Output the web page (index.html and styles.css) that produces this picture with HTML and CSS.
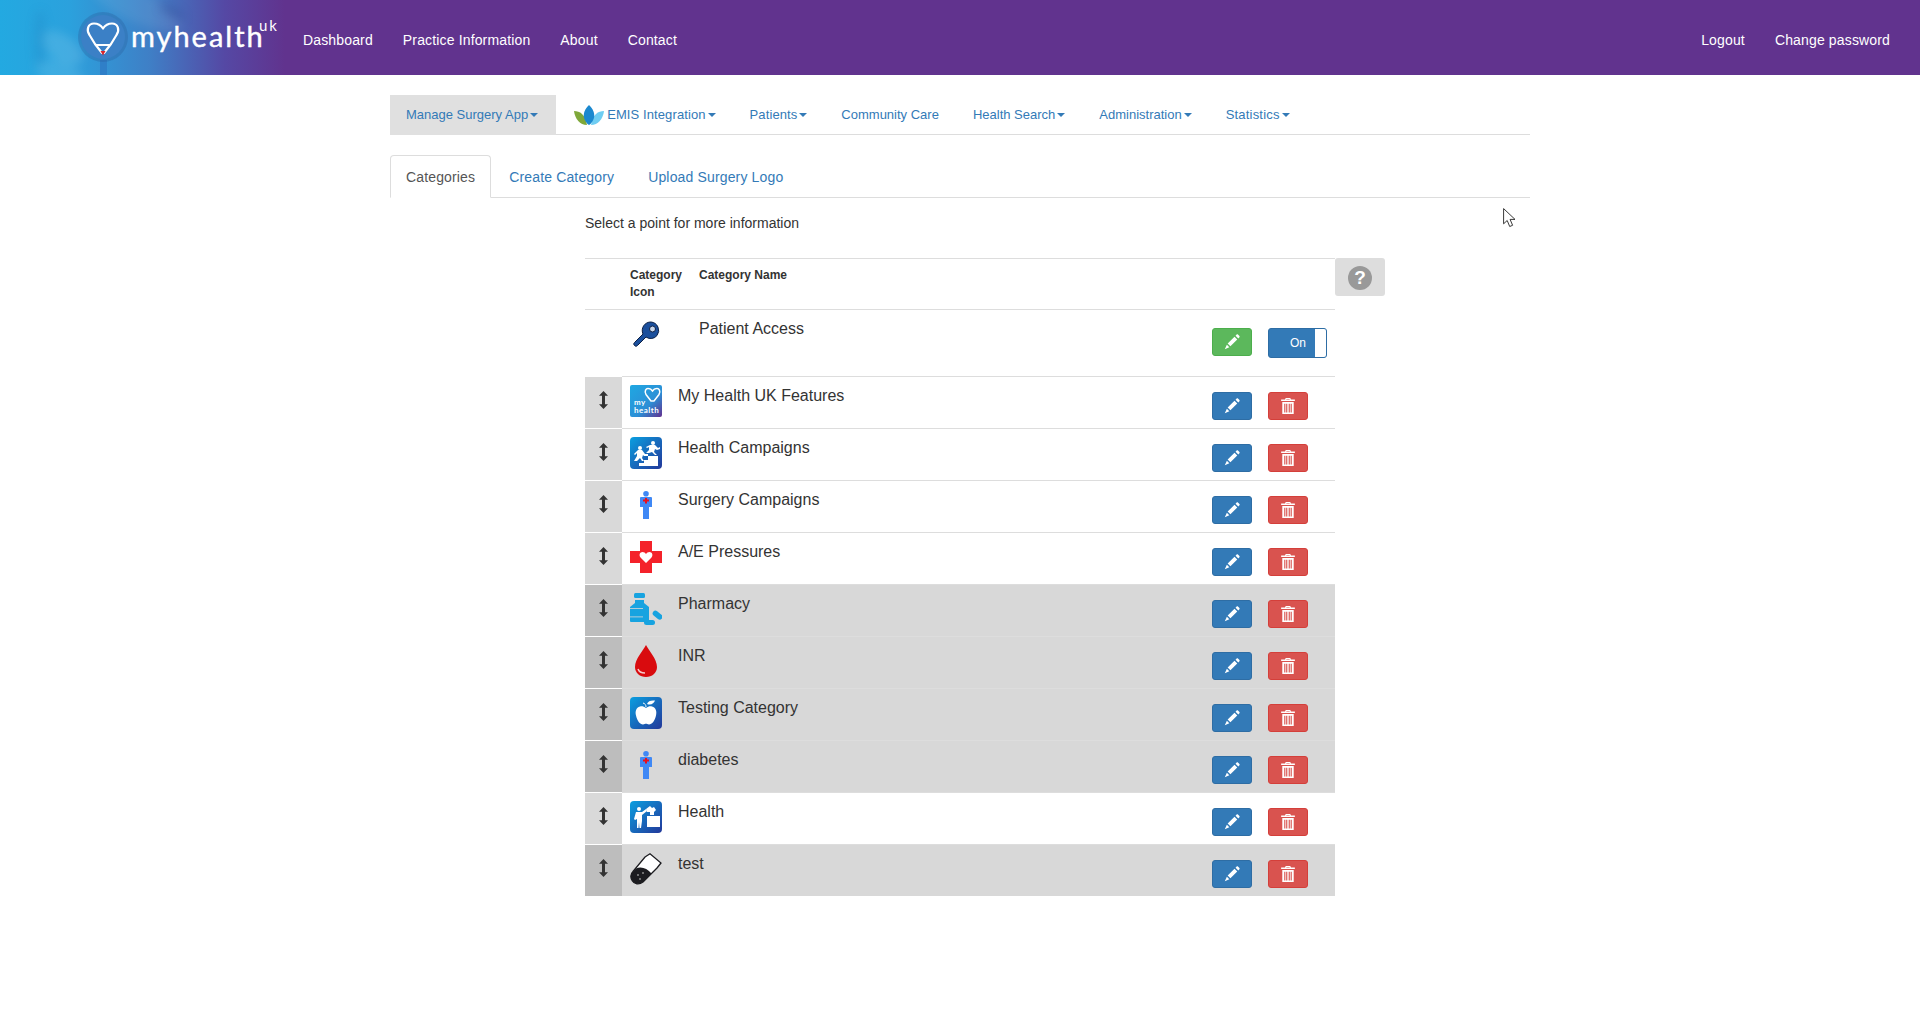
FILE: index.html
```html
<!DOCTYPE html>
<html lang="en">
<head>
    <meta charset="UTF-8">
    <meta name="viewport" content="width=device-width, initial-scale=1.0">
    <title>Manage Surgery App - Categories</title>
    <link rel="stylesheet" href="styles.css">
</head>
<body>
    <svg class="sprite" aria-hidden="true">
        <defs>
            <linearGradient id="tileBlue" x1="0" y1="0" x2="1" y2="1">
                <stop offset="0" stop-color="#0a9fe0"/>
                <stop offset="1" stop-color="#23389a"/>
            </linearGradient>
            <linearGradient id="tileBrand" x1="0" y1="0" x2="1" y2="1">
                <stop offset="0" stop-color="#1fa8e2"/>
                <stop offset="0.6" stop-color="#2c8fd6"/>
                <stop offset="1" stop-color="#63308f"/>
            </linearGradient>
        </defs>
        <symbol id="i-pencil" viewBox="0 0 14 14">
            <path fill="#fff" d="M3.2 8.4 9.2 2.400l2.400 2.400-6 6zM2.500 9.300l2.200 2.200-4 1.800zM10.100 1.500l1-1c.3-.3.8-.3 1.100 0l1.300 1.300c.3.3.3.8 0 1.100l-1 1z"/>
        </symbol>
        <symbol id="i-trash" viewBox="0 0 14 14">
            <path fill="#fff" fill-rule="evenodd" d="M5 0h4l.6 1.400H13v1.300H1V1.400h3.400zM5.700 .8l-.3.6h3.200l-.3-.6zM2 3.400h10V14H2zM3.700 5v7.600h1V5zM5.400 5v7.600h1V5zM7.600 5v7.600h1V5zM9.300 5v7.600h1V5z"/>
        </symbol>
        <symbol id="i-sort" viewBox="0 0 9 18">
            <path fill="#333" d="M4.500 0 9 4.800H6v8.400h3L4.500 18 0 13.200h3V4.800H0z"/>
        </symbol>
        <symbol id="i-person" viewBox="0 0 32 32">
            <circle cx="16" cy="4.700" r="2.800" fill="#3f88f5"/>
            <path fill="#3f88f5" d="M11 8h10q1 0 1 1v9h-3v12h-6V18h-3V9q0-1 1-1z"/>
            <path fill="#e8101c" d="M15 9h2v1.500h2v2h-2v2h-2v-2h-2v-2h2z"/>
        </symbol>
    </svg>

    <header class="topbar">
        <a class="brand" href="#">
            <svg class="brand-photo" viewBox="0 0 288 75" aria-hidden="true">
                <g class="blurred">
                    <ellipse cx="62" cy="48" rx="24" ry="13" transform="rotate(35 62 48)" fill="#fff" opacity="0.12"/>
                    <ellipse cx="60" cy="74" rx="26" ry="12" transform="rotate(20 60 74)" fill="#fff" opacity="0.1"/>
                    <ellipse cx="40" cy="40" rx="6" ry="30" fill="#1a6fb4" opacity="0.18"/>
                    <ellipse cx="135" cy="5" rx="50" ry="16" transform="rotate(25 135 5)" fill="#fff" opacity="0.08"/>
                    <ellipse cx="172" cy="12" rx="14" ry="5" transform="rotate(30 172 12)" fill="#25408f" opacity="0.3"/>
                </g>
            </svg>
            <svg class="brand-mark" viewBox="0 0 56 75" aria-hidden="true">
                <rect x="25" y="60" width="7" height="15" fill="#2f7fc8"/>
                <circle cx="28" cy="37" r="25" fill="#2c5f9f" opacity="0.35"/>
                <circle cx="28" cy="37" r="22" fill="#3b80c6"/>
                <path fill="none" stroke="#fff" stroke-width="2.200" stroke-linejoin="round" stroke-linecap="round" d="M20 44 14.500 35c-3.500-5-1.500-11.500 4.500-11.500 4 0 7 2 9 5 2-3 5-5 9-5 6 0 8 6.500 4.500 11.500L36 44M20 44l7 9h2l7-9M21 45h14"/>
                <path fill="#d8262e" d="M25.500 51h5L28 55.500z"/>
            </svg>
            <span class="brand-name">myhealth<sup>uk</sup></span>
        </a>
        <nav class="topnav">
            <a href="#">Dashboard</a>
            <a href="#">Practice Information</a>
            <a href="#">About</a>
            <a href="#">Contact</a>
        </nav>
        <nav class="topnav topnav-right">
            <a href="#">Logout</a>
            <a href="#">Change password</a>
        </nav>
    </header>

    <main class="container">
        <ul class="nav-tabs nav-main">
            <li class="grey"><a href="#">Manage Surgery App<span class="caret"></span></a></li>
            <li><a href="#">
                <svg class="emis-leaf" viewBox="0 0 30 20" aria-hidden="true">
                    <path fill="#7fa83a" d="M0 6c6 0 11 3 13 14C6 20 1 14 0 6z"/>
                    <path fill="#6fcdf2" d="M30 6c-6 0-11 3-13 14 7 0 12-6 13-14z"/>
                    <path fill="#1b88cf" d="M15 0c4 4 6 8 5 13-1 3-3 6-5 7-2-1-4-4-5-7-1-5 1-9 5-13z"/>
                </svg>
                EMIS Integration<span class="caret"></span></a></li>
            <li><a href="#">Patients<span class="caret"></span></a></li>
            <li class="tight"><a href="#">Community Care</a></li>
            <li class="tight"><a href="#">Health Search<span class="caret"></span></a></li>
            <li class="tight"><a href="#">Administration<span class="caret"></span></a></li>
            <li class="wide"><a href="#">Statistics<span class="caret"></span></a></li>
        </ul>

        <ul class="nav-tabs nav-sub">
            <li class="active"><a href="#">Categories</a></li>
            <li><a href="#">Create Category</a></li>
            <li><a href="#">Upload Surgery Logo</a></li>
        </ul>

        <div class="content">
            <p class="intro">Select a point for more information</p>

            <div class="cat-area">
                <div class="cat-tables">
                    <table class="cat-table cat-head">
                        <thead>
                            <tr>
                                <th class="col-handle"></th>
                                <th class="col-icon-wide">Category Icon</th>
                                <th>Category Name</th>
                                <th class="col-actions"></th>
                            </tr>
                        </thead>
                        <tbody>
                            <tr>
                                <td></td>
                                <td>
                                    <svg class="cat-icon" viewBox="0 0 32 32" aria-hidden="true">
                                        <path fill="#1b4f9c" stroke="#0b1f44" stroke-width="1" d="M21 4a8.500 8.500 0 0 1 6 13.500 8 8 0 0 1-11 1.500L7.500 27.500c-1 1-2 1-3 0s-1-2 0-3L13 16a8.500 8.500 0 0 1 8-12z"/>
                                        <circle cx="22.500" cy="11" r="3" fill="#c9d6ea" stroke="#0b1f44" stroke-width="1"/>
                                    </svg>
                                </td>
                                <td class="cat-name">Patient Access</td>
                                <td class="col-actions cell-tall">
                                    <div class="actions">
                                        <a class="btn btn-green" href="#"><svg class="glyph"><use href="#i-pencil"/></svg></a>
                                        <span class="toggle"><span class="toggle-label">On</span><span class="toggle-knob"></span></span>
                                    </div>
                                </td>
                            </tr>
                        </tbody>
                    </table>

                    <table class="cat-table cat-list">
                        <tbody>
                            <tr>
                                <td class="col-handle"><svg class="sort"><use href="#i-sort"/></svg></td>
                                <td class="col-icon">
                                    <svg class="cat-icon" viewBox="0 0 32 32" aria-hidden="true">
                                        <rect width="32" height="32" rx="2" fill="url(#tileBrand)"/>
                                        <path fill="none" stroke="#fff" stroke-width="1.500" d="M21 16 16 9.500c-2-3 0-6.500 2.500-6 1.500 0 3 1 4 2.500 1-1.500 2.500-2.500 4-2.500 2.500-.5 4.500 3 2.500 6L24 16z"/>
                                        <text class="tile-text" x="4" y="20">my</text>
                                        <text class="tile-text" x="4" y="28">health</text>
                                    </svg>
                                </td>
                                <td class="cat-name">My Health UK Features</td>
                                <td class="col-actions"><div class="actions"><a class="btn btn-blue" href="#"><svg class="glyph"><use href="#i-pencil"/></svg></a><a class="btn btn-red" href="#"><svg class="glyph"><use href="#i-trash"/></svg></a></div></td>
                            </tr>
                            <tr>
                                <td class="col-handle"><svg class="sort"><use href="#i-sort"/></svg></td>
                                <td class="col-icon">
                                    <svg class="cat-icon" viewBox="0 0 32 32" aria-hidden="true">
                                        <rect width="32" height="32" rx="4" fill="url(#tileBlue)"/>
                                        <path fill="#fff" d="M9 29v-3h5v-3h4v-4h10v10z"/>
                                        <circle cx="10" cy="11" r="2" fill="#fff"/>
                                        <path fill="#fff" d="M8 13h4l3 4 3 0v2h-4l-1-1-1 3 2 3h-2l-2-3-3 3H4l3-5 0-3-2 2-1-1z"/>
                                        <circle cx="23" cy="6" r="2" fill="#fff"/>
                                        <path fill="#fff" d="M20 8h5l3 3 2-1v2l-3 1-2-1-1 3 3 3h-2l-3-3-3 1h-3l3-3 0-3-2 1-1-1z"/>
                                    </svg>
                                </td>
                                <td class="cat-name">Health Campaigns</td>
                                <td class="col-actions"><div class="actions"><a class="btn btn-blue" href="#"><svg class="glyph"><use href="#i-pencil"/></svg></a><a class="btn btn-red" href="#"><svg class="glyph"><use href="#i-trash"/></svg></a></div></td>
                            </tr>
                            <tr>
                                <td class="col-handle"><svg class="sort"><use href="#i-sort"/></svg></td>
                                <td class="col-icon"><svg class="cat-icon"><use href="#i-person"/></svg></td>
                                <td class="cat-name">Surgery Campaigns</td>
                                <td class="col-actions"><div class="actions"><a class="btn btn-blue" href="#"><svg class="glyph"><use href="#i-pencil"/></svg></a><a class="btn btn-red" href="#"><svg class="glyph"><use href="#i-trash"/></svg></a></div></td>
                            </tr>
                            <tr>
                                <td class="col-handle"><svg class="sort"><use href="#i-sort"/></svg></td>
                                <td class="col-icon">
                                    <svg class="cat-icon" viewBox="0 0 32 32" aria-hidden="true">
                                        <path fill="#f4222a" d="M10 0h12v10h10v12H22v10H10V22H0V10h10z"/>
                                        <path fill="#fff" d="M16 22 10.500 16.500c-2-2.500-.5-5.500 2-5.500 1.500 0 2.700.8 3.500 2 .8-1.200 2-2 3.500-2 2.500 0 4 3 2 5.500z"/>
                                    </svg>
                                </td>
                                <td class="cat-name">A/E Pressures</td>
                                <td class="col-actions"><div class="actions"><a class="btn btn-blue" href="#"><svg class="glyph"><use href="#i-pencil"/></svg></a><a class="btn btn-red" href="#"><svg class="glyph"><use href="#i-trash"/></svg></a></div></td>
                            </tr>
                            <tr class="row-off">
                                <td class="col-handle"><svg class="sort"><use href="#i-sort"/></svg></td>
                                <td class="col-icon">
                                    <svg class="cat-icon" viewBox="0 0 32 32" aria-hidden="true">
                                        <rect x="4" y="0" width="11" height="5" rx="1.500" fill="#17a3e0"/>
                                        <path fill="#17a3e0" d="M5 7h9v3l5 4v14q0 1-1 1H1q-1 0-1-1V14l5-4z"/>
                                        <rect x="0" y="15" width="13" height="0.800" fill="#d8d8d8"/>
                                        <rect x="0" y="23.500" width="13" height="0.800" fill="#d8d8d8"/>
                                        <rect x="22" y="19" width="11" height="5.500" rx="2.700" fill="#17a3e0" transform="rotate(40 27 22)"/>
                                        <rect x="14" y="27" width="11" height="5" rx="2.500" fill="#17a3e0"/>
                                    </svg>
                                </td>
                                <td class="cat-name">Pharmacy</td>
                                <td class="col-actions"><div class="actions"><a class="btn btn-blue" href="#"><svg class="glyph"><use href="#i-pencil"/></svg></a><a class="btn btn-red" href="#"><svg class="glyph"><use href="#i-trash"/></svg></a></div></td>
                            </tr>
                            <tr class="row-off">
                                <td class="col-handle"><svg class="sort"><use href="#i-sort"/></svg></td>
                                <td class="col-icon">
                                    <svg class="cat-icon" viewBox="0 0 32 32" aria-hidden="true">
                                        <path fill="#d90b0e" d="M16 0c3 6 11 14 11 22 0 6-5 10-11 10S5 28 5 22C5 14 13 6 16 0z"/>
                                        <path fill="none" stroke="#f6c9c9" stroke-width="1.500" d="M8 24c1 3 4 4 7 4"/>
                                    </svg>
                                </td>
                                <td class="cat-name">INR</td>
                                <td class="col-actions"><div class="actions"><a class="btn btn-blue" href="#"><svg class="glyph"><use href="#i-pencil"/></svg></a><a class="btn btn-red" href="#"><svg class="glyph"><use href="#i-trash"/></svg></a></div></td>
                            </tr>
                            <tr class="row-off">
                                <td class="col-handle"><svg class="sort"><use href="#i-sort"/></svg></td>
                                <td class="col-icon">
                                    <svg class="cat-icon" viewBox="0 0 32 32" aria-hidden="true">
                                        <rect width="32" height="32" rx="4" fill="url(#tileBlue)"/>
                                        <path fill="#fff" d="M16 11c2-1.500 4-2 6-1.500 4 1 5 5 4 9-1 5-4 9-7 9-1.500 0-2-.7-3-.7s-1.500 .7-3 .7c-3 0-6-4-7-9-1-4 0-8 4-9 2-.5 4 0 6 1.500z"/>
                                        <path fill="none" stroke="#fff" stroke-width="1" d="M16 10c0-2-1-3.500-3-4"/>
                                        <path fill="#fff" d="M17 7c1-3 4-4 8-3.500-1 3-4 5-8 3.500z"/>
                                    </svg>
                                </td>
                                <td class="cat-name">Testing Category</td>
                                <td class="col-actions"><div class="actions"><a class="btn btn-blue" href="#"><svg class="glyph"><use href="#i-pencil"/></svg></a><a class="btn btn-red" href="#"><svg class="glyph"><use href="#i-trash"/></svg></a></div></td>
                            </tr>
                            <tr class="row-off">
                                <td class="col-handle"><svg class="sort"><use href="#i-sort"/></svg></td>
                                <td class="col-icon"><svg class="cat-icon"><use href="#i-person"/></svg></td>
                                <td class="cat-name">diabetes</td>
                                <td class="col-actions"><div class="actions"><a class="btn btn-blue" href="#"><svg class="glyph"><use href="#i-pencil"/></svg></a><a class="btn btn-red" href="#"><svg class="glyph"><use href="#i-trash"/></svg></a></div></td>
                            </tr>
                            <tr>
                                <td class="col-handle"><svg class="sort"><use href="#i-sort"/></svg></td>
                                <td class="col-icon">
                                    <svg class="cat-icon" viewBox="0 0 32 32" aria-hidden="true">
                                        <rect width="32" height="32" rx="4" fill="url(#tileBlue)"/>
                                        <circle cx="9" cy="8" r="2" fill="#fff"/>
                                        <path fill="#fff" d="M6 11h6l4-3 1 2-5 4v6l-1 7H9.500l-.5-6-.5 6H7v-9l-2 1-1-1z"/>
                                        <path fill="#fff" d="M17 15h13v11H17z"/>
                                        <path fill="#fff" d="M16 8l4-3 2 2 2-1 2 3-2 2v3h-4v-3h-3z"/>
                                    </svg>
                                </td>
                                <td class="cat-name">Health</td>
                                <td class="col-actions"><div class="actions"><a class="btn btn-blue" href="#"><svg class="glyph"><use href="#i-pencil"/></svg></a><a class="btn btn-red" href="#"><svg class="glyph"><use href="#i-trash"/></svg></a></div></td>
                            </tr>
                            <tr class="row-off">
                                <td class="col-handle"><svg class="sort"><use href="#i-sort"/></svg></td>
                                <td class="col-icon">
                                    <svg class="cat-icon" viewBox="0 0 32 32" aria-hidden="true">
                                        <path fill="#fff" stroke="#1c1c20" stroke-width="1.300" d="M15 4 20 .8 31 10l-4 5-14 14c-4 3-9 2-10.500-1C0 25 .5 21 3 18.500z"/>
                                        <path fill="#1c1c20" d="M6 15.500c5-2.500 11-.5 15.500 5L13 29c-4 3-9 2-10.500-1C0 25 .5 21 3 18.500z"/>
                                        <circle cx="8" cy="22" r="1" fill="#8a8a8a"/>
                                        <circle cx="13" cy="20" r="1" fill="#8a8a8a"/>
                                        <circle cx="10" cy="26" r="1" fill="#8a8a8a"/>
                                    </svg>
                                </td>
                                <td class="cat-name">test</td>
                                <td class="col-actions"><div class="actions"><a class="btn btn-blue" href="#"><svg class="glyph"><use href="#i-pencil"/></svg></a><a class="btn btn-red" href="#"><svg class="glyph"><use href="#i-trash"/></svg></a></div></td>
                            </tr>
                        </tbody>
                    </table>
                </div>
                <a class="help-btn" href="#"><span class="help-circle">?</span></a>
            </div>
        </div>
    </main>

    <svg class="pointer" viewBox="0 0 13 20" aria-hidden="true">
        <path fill="#fff" stroke="#222" stroke-width="0.900" d="M.6.600v15.200l3.600-3.300 2.500 6 2.900-1.200-2.500-5.900h4.900z"/>
    </svg>
</body>
</html>
```

FILE: styles.css
```css
body {
    margin: 0;
    font-family: "Liberation Sans", Arial, sans-serif;
    font-size: 14px;
    line-height: 20px;
    color: #333;
    background: #fff;
}

a {
    color: #337ab7;
    text-decoration: none;
}

.sprite {
    position: absolute;
    width: 0;
    height: 0;
}

/* top bar */
.topbar {
    display: flex;
    align-items: center;
    height: 75px;
    background: linear-gradient(90deg, #23a9e1 0, #2ba1dd 70px, #3f7fc6 150px, #5548a4 225px, #61338e 285px);
}

.brand {
    position: relative;
    display: flex;
    align-items: center;
    width: 288px;
    height: 75px;
    flex-shrink: 0;
    color: #fff;
}

.brand-photo {
    position: absolute;
    left: 0;
    top: 0;
    width: 288px;
    height: 75px;
}

.blurred {
    filter: blur(5px);
}

.brand-mark {
    position: relative;
    width: 56px;
    height: 75px;
    margin-left: 75px;
    flex-shrink: 0;
}

.brand-name {
    position: relative;
    margin-top: -3px;
    font-family: Lato, sans-serif;
    font-size: 29px;
    line-height: 36px;
    letter-spacing: 2px;
    -webkit-text-stroke: 0.400px #fff;
}

.brand-name sup {
    position: absolute;
    left: 128px;
    top: -1px;
    font-size: 15px;
    line-height: 16px;
    letter-spacing: 2px;
    -webkit-text-stroke: 0;
}

.topnav {
    display: flex;
    padding-top: 5px;
    letter-spacing: 0.150px;
}

.topnav a {
    padding: 0 15px;
    color: #fff;
}

.topnav-right {
    margin-left: auto;
    margin-right: 15px;
}

/* tabs */
.container {
    width: 1140px;
    margin: 0 auto;
}

.nav-tabs {
    display: flex;
    margin: 0;
    padding: 0;
    list-style: none;
    border-bottom: 1px solid #ddd;
}

.nav-tabs li {
    margin-right: 2px;
}

.nav-tabs a {
    display: flex;
    align-items: center;
    padding: 0 15px;
    border: 1px solid transparent;
}

.nav-main {
    margin-top: 20px;
    font-size: 13px;
    letter-spacing: 0.100px;
}

.nav-main li {
    height: 39px;
}

.nav-main .tight {
    letter-spacing: 0;
}

.nav-main .wide {
    letter-spacing: 0.200px;
}

.nav-main a {
    height: 39px;
    box-sizing: border-box;
    border-bottom: 0;
}

.nav-main .grey {
    letter-spacing: 0;
}

.nav-main .grey a {
    background: #e0e0e0;
    height: 40px;
    padding-right: 17px;
    padding-bottom: 1px;
}

.emis-leaf {
    width: 30px;
    height: 20px;
    margin-right: 3px;
}

.caret {
    display: inline-block;
    width: 0;
    height: 0;
    margin-left: 2px;
    border-top: 4px solid #337ab7;
    border-left: 4px solid transparent;
    border-right: 4px solid transparent;
}

.nav-sub {
    margin-top: 20px;
    height: 42px;
    letter-spacing: 0.150px;
}

.nav-sub a {
    height: 43px;
    box-sizing: border-box;
    border-radius: 4px 4px 0 0;
}

.nav-sub .active a {
    color: #555;
    background: #fff;
    border-color: #ddd;
    border-bottom-color: #fff;
}

/* category tables */
.content {
    width: 800px;
    margin-left: 195px;
}

.intro {
    margin: 15px 0 25px;
}

.cat-area {
    display: flex;
    align-items: flex-start;
}

.cat-tables {
    width: 750px;
}

.cat-table {
    width: 750px;
    table-layout: fixed;
    border-collapse: collapse;
}

.cat-table th,
.cat-table td {
    padding: 8px;
    text-align: left;
    vertical-align: top;
    border-top: 1px solid #ddd;
}

.cat-table th {
    font-size: 12px;
    line-height: 17px;
}

.col-handle {
    width: 21px;
}

.col-icon-wide {
    width: 53px;
}

.col-icon {
    width: 32px;
}

.col-actions {
    width: 115px;
}

.cat-table .col-actions {
    padding-top: 15px;
    padding-bottom: 8px;
}

.cat-table .cell-tall {
    padding-top: 18px;
    padding-bottom: 18px;
}

.cat-icon {
    display: block;
    width: 32px;
    height: 32px;
}

.tile-text {
    font-family: Lato, sans-serif;
    font-size: 8px;
    font-weight: 700;
    letter-spacing: 0.500px;
    fill: #fff;
}

.cat-table .cat-name {
    padding-top: 7px;
    font-size: 16px;
    line-height: 23px;
}

.cat-list .col-handle {
    background: #d9d9d9;
    border-top-color: #fff;
    text-align: center;
    padding-top: 14px;
}

.row-off td {
    background: #d8d8d8;
}

.cat-list .row-off .col-handle {
    background: #bdbdbd;
}

.sort {
    display: block;
    width: 9px;
    height: 18px;
    margin: 0 auto;
}

.actions {
    display: flex;
    gap: 16px;
}

.btn {
    display: flex;
    align-items: center;
    justify-content: center;
    width: 40px;
    height: 28px;
    box-sizing: border-box;
    border-radius: 3px;
    border: 1px solid transparent;
}

.btn-blue {
    background: #337ab7;
    border-color: #2e6da4;
}

.btn-red {
    background: #d9534f;
    border-color: #d43f3a;
}

.btn-green {
    background: #5cb85c;
    border-color: #4cae4c;
}

.glyph {
    width: 16px;
    height: 16px;
}

.toggle {
    display: flex;
    align-items: stretch;
    width: 59px;
    height: 30px;
    box-sizing: border-box;
    background: #337ab7;
    border: 1px solid #2e6da4;
    border-radius: 3px;
}

.toggle-label {
    flex: 1;
    text-align: center;
    color: #fff;
    font-size: 12px;
    line-height: 28px;
    padding-left: 12px;
}

.toggle-knob {
    width: 11px;
    background: #fff;
    border-radius: 0 2px 2px 0;
}

.help-btn {
    display: flex;
    align-items: center;
    justify-content: center;
    width: 50px;
    height: 38px;
    box-sizing: border-box;
    padding-top: 2px;
    background: #ddd;
    border-radius: 3px;
}

.help-circle {
    width: 24px;
    height: 24px;
    border-radius: 50%;
    background: #999;
    color: #fff;
    font-size: 19px;
    font-weight: bold;
    line-height: 24px;
    text-align: center;
}

/* mouse pointer in the shot */
.pointer {
    position: absolute;
    left: 1503px;
    top: 208px;
    width: 13px;
    height: 20px;
}
```
